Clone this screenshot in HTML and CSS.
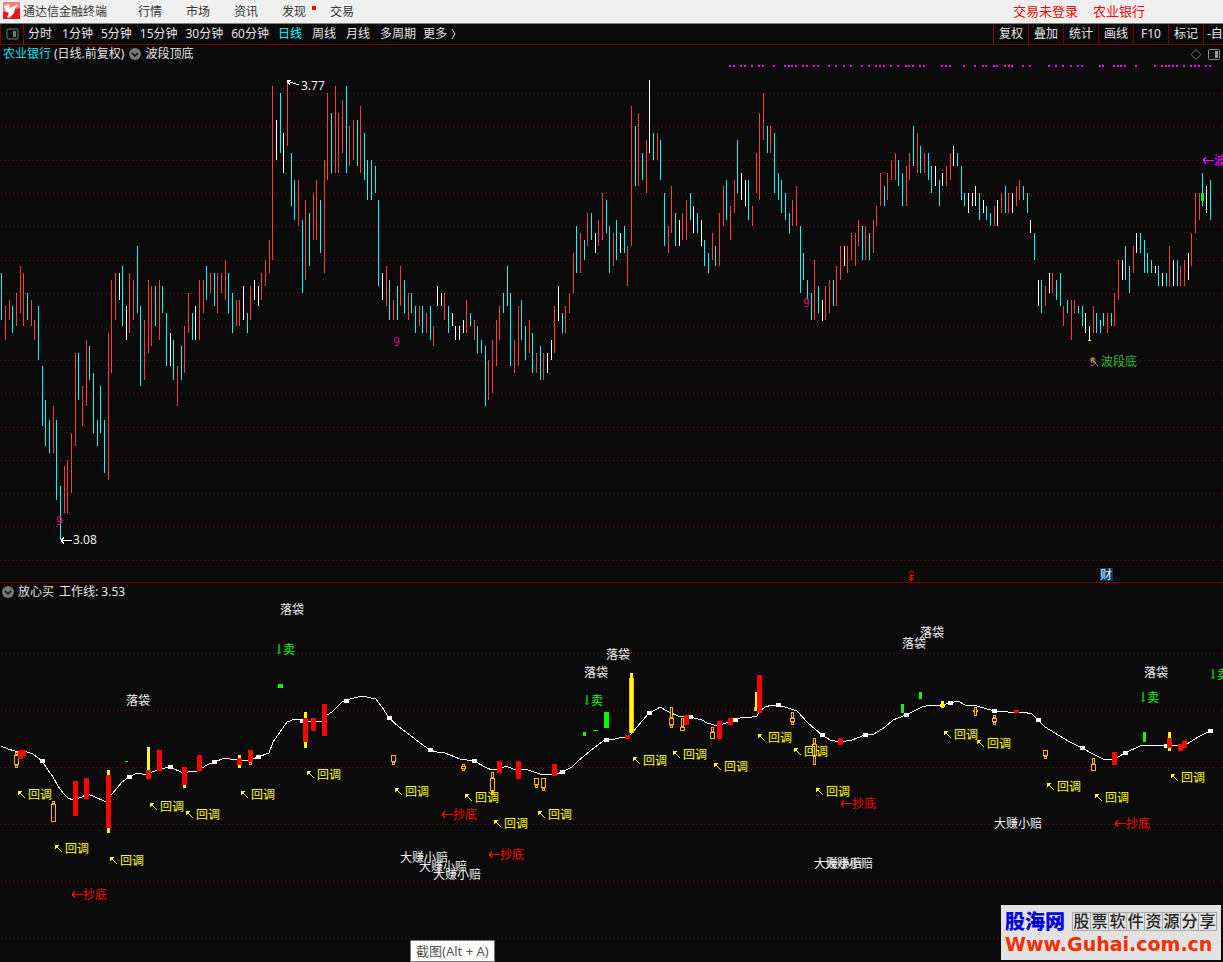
FILE: index.html
```html
<!DOCTYPE html>
<html lang="zh-CN">
<head>
<meta charset="utf-8">
<meta name="viewport" content="width=device-width, initial-scale=1">
<title>通达信金融终端</title>
<link rel="stylesheet" href="styles.css">
</head>
<body>
<header class="menubar">
  <svg class="logo" viewBox="0 0 17 17" aria-hidden="true">
    <rect width="17" height="17" fill="#e01b1b"/>
    <path d="M0 0h17v6L0 10z" fill="#f4827e"/>
    <path d="M1 4l5-2 1 4 9-4-4 4-1 5-5 5-2-1 2-4-3-1-1-3z" fill="#fff"/>
  </svg>
  <span class="brand">通达信金融终端</span>
  <nav class="menu">
    <button>行情</button>
    <button>市场</button>
    <button>资讯</button>
    <button class="has-news">发现</button>
    <button>交易</button>
  </nav>
  <div class="account"><button>交易未登录</button><button>农业银行</button></div>
</header>

<div class="toolbar">
  <button class="pane-toggle" aria-label="侧栏">
    <svg width="13" height="12" viewBox="0 0 13 12"><rect x="1" y="1" width="11" height="10" rx="1" fill="none" stroke="#777"/><rect x="7" y="3" width="3" height="6" fill="#777"/></svg>
  </button>
  <div class="periods">
    <button class="first">分时</button>
    <button>1分钟</button>
    <button>5分钟</button>
    <button>15分钟</button>
    <button>30分钟</button>
    <button>60分钟</button>
  </div>
  <div class="periods long">
    <button class="line active">日线</button>
    <button class="line">周线</button>
    <button class="line">月线</button>
    <button>多周期</button>
    <button class="more">更多<svg width="5" height="12" viewBox="0 0 5 12" aria-hidden="true"><path d="M1 1l3 5-3 5" fill="none" stroke="#ddd"/></svg></button>
  </div>
  <div class="tools">
    <button>复权</button>
    <button>叠加</button>
    <button>统计</button>
    <button>画线</button>
    <button>F10</button>
    <button>标记</button>
    <button class="cut">-自</button>
  </div>
</div>

<main>
  <section class="panel">
    <div class="panel-title">
      <span class="stock">农业银行</span>
      <span class="mode">(日线.前复权)</span>
      <svg class="fold" width="12" height="12" viewBox="0 0 12 12" aria-hidden="true"><circle cx="6" cy="6" r="6" fill="#777"/><path d="M3 5l3 3 3-3" fill="none" stroke="#0a0a0a" stroke-width="1.5"/></svg>
      <span>波段顶底</span>
      <svg class="corner" width="30" height="13" viewBox="0 0 30 13" aria-hidden="true"><path d="M6 1.500l5 5-5 5-5-5z" fill="none" stroke="#777"/><rect x="18.500" y="1.500" width="11" height="10" rx="1" fill="none" stroke="#888"/><rect x="25" y="3" width="3" height="7" fill="#999"/></svg>
    </div>
    <svg class="chart" id="price" viewBox="0 63 1223 519" role="img" aria-label="K线">
      <g class="grid"></g>
      <g class="bars"></g>
      <g class="dots"></g>
      <rect x="1201" y="193" width="3" height="8" fill="#0f0"/>
      <rect x="1088" y="340" width="3" height="1" fill="#ff0"/>
      <g class="arrow white">
        <path d="M61 540.500H72M61 540.500l3-3M61 540.500l3 3"/>
        <path d="M287 81l12 4M287 81l4-1M287 81l3 4"/>
      </g>
      <text class="white" x="73" y="544">3.08</text>
      <text class="white" x="301" y="90">3.77</text>
      <g class="nine">
        <text x="56" y="525">9</text>
        <text x="393" y="346">9</text>
        <text x="803" y="307">9</text>
        <text x="1089" y="366">9</text>
      </g>
      <path class="arrow head lime" d="M1091 358h4l-4 4zM1091 358l7 8"/>
      <text class="bottom" x="1101" y="366">波段底</text>
      <path class="arrow magenta" d="M1203 160.500h11M1203 160.500l3-3M1203 160.500l3 3"/>
      <text class="magenta" x="1214" y="165">波段顶</text>
      <path class="arrow red smooth" d="M909 573l2.500-2 2.500 2M914 575.500h-3.500q-1 0-1 1t1 1h2q1 0 1 1t-1 1H909M911.500 574v7"/>
      <rect x="1100" y="568" width="13" height="13" fill="#003a70"/>
      <text class="white" x="1100" y="579">财</text>
    </svg>
  </section>

  <section class="panel lower">
    <div class="panel-title">
      <svg class="fold" width="12" height="12" viewBox="0 0 12 12" aria-hidden="true"><circle cx="6" cy="6" r="6" fill="#777"/><path d="M3 5l3 3 3-3" fill="none" stroke="#0a0a0a" stroke-width="1.500"/></svg>
      <span>放心买</span>
      <span class="value">工作线: 3.53</span>
    </div>
    <svg class="chart" id="signal" viewBox="0 601 1223 361" role="img" aria-label="放心买">
      <g class="grid"></g>
      <polyline class="workline"/>
      <g class="nodes"></g>
      <g class="blocks"></g>
      <g class="notes"></g>
    </svg>
  </section>
</main>

<div class="tip" role="tooltip">截图(Alt + A)</div>
<aside class="watermark">
  <div class="row"><b>股海网</b><span class="cells"><span>股</span><span>票</span><span>软</span><span>件</span><span>资</span><span>源</span><span>分</span><span>享</span></span></div>
  <div class="site">Www.Guhai.com.cn</div>
</aside>
<script src="app.js"></script>
</body>
</html>
```
FILE: styles.css
```css
* { box-sizing: border-box; }
body {
  margin: 0;
  position: relative;
  background: #0a0a0a;
  color: #e6e6e6;
  font: 12px/18px "Noto Sans", "Noto Sans CJK SC", sans-serif;
  overflow-x: hidden;
}
button {
  margin: 0;
  padding: 0;
  border: 0;
  background: none;
  color: inherit;
  font: inherit;
  white-space: nowrap;
}
.menubar {
  display: flex;
  align-items: center;
  height: 24px;
  padding: 0 78px 0 3px;
  background: #f0f0f0;
  border-bottom: 1px solid #808080;
  color: #333;
}
.logo { width: 17px; height: 17px; margin: 0 3px 2px 0; }
.brand { margin-right: 31px; }
.menu { display: flex; gap: 24px; }
.has-news { position: relative; }
.has-news::after {
  content: "";
  position: absolute;
  left: 30px;
  top: 3px;
  width: 4px;
  height: 4px;
  background: #f00;
}
.account { display: flex; gap: 15px; margin: 0 0 1px auto; color: #f00; font-size: 13px; }

.toolbar {
  display: flex;
  height: 21px;
  border-bottom: 1px solid #800000;
}
.pane-toggle {
  display: grid;
  place-items: center;
  width: 24px;
  border: solid #800000;
  border-width: 0 1px;
}
.periods { display: flex; align-items: center; gap: 8px; padding-left: 4px; }
.periods .first { margin-right: 2px; }
.long { gap: 7px; padding-left: 9px; }
.line { margin-right: 3px; }
.active { color: #00ffff; }
.more { display: flex; align-items: center; gap: 4px; }
.tools { display: flex; margin-left: auto; overflow: hidden; }
.tools button { width: 35px; border-left: 1px solid #800000; }
.tools .cut { width: 20px; text-align: left; padding-left: 3px; overflow: hidden; }

.panel-title {
  display: flex;
  align-items: center;
  height: 18px;
  padding: 0 3px;
}
.stock { color: #00e5ee; margin-right: 3px; }
.fold { margin: 0 4px 0 5px; }
.corner { margin-left: auto; }
.lower { border-top: 1px solid #800000; }
.lower .panel-title { padding-left: 2px; }
.lower .fold { margin-left: 0; }
.value { margin-left: 5px; }
.chart { display: block; width: 100%; height: auto; shape-rendering: crispEdges; }
.chart text { font: 12px "Noto Sans", "Noto Sans CJK SC", sans-serif; }
.grid path { stroke: #780808; stroke-dasharray: 1 3; }
.bars .R { stroke: #ff3c3c; }
.bars .C { stroke: #00ffff; }
.bars .W { stroke: #ffffff; }
.dots { fill: #f0f; }
.white { color: #fff; fill: #f0f0f0; }
.lime { color: #3fbf3f; }
.red { color: #f00; }
.magenta { color: #f0f; fill: #f0f; }
.nine { fill: #e6007e; }
.bottom { fill: #38b838; }
.workline { fill: none; stroke: #fff; }
.nodes { fill: #fff; }
.block-red { fill: #f00; }
.block-yellow { fill: #ff0; }
.block-green { fill: #0f0; }
.block-outline { fill: #0a0a0a; stroke: #ffb400; }
.dip { color: #ff0; fill: #ff0; }
.buy { color: #f00; fill: #f00; }
.sell { color: #00a000; fill: #0f0; }
.plain { fill: #f4f4f4; }
.arrow { fill: none; stroke: currentColor; }
.arrow.head { fill: currentColor; stroke-width: 1px; }
.smooth { shape-rendering: geometricPrecision; }

.tip {
  position: absolute;
  left: 410px;
  bottom: 0;
  padding: 1px 5px;
  border: 1px solid #777;
  background: #fff;
  color: #555;
  font-size: 13px;
}
.watermark {
  position: absolute;
  right: 2px;
  bottom: 2px;
  width: 220px;
  height: 55px;
  padding: 6px 4px 0 4px;
  background: #e2e2e2;
  white-space: nowrap;
}
.row { display: flex; justify-content: space-between; align-items: center; height: 21px; }
.row b { color: #0000e0; font-size: 20px; font-weight: 900; }
.cells { display: flex; border-right: 1px solid #aaa; }
.cells span {
  width: 18px;
  border: 1px solid #aaa;
  border-right: 0;
  color: #222;
  font-size: 16px;
  font-weight: 500;
  line-height: 17px;
  text-align: center;
}
.site { color: #f03000; font: bold 19px/24px "DejaVu Sans", sans-serif; }
```
FILE: app.js
```js
const add = (parent, name, attrs, text) => {
  const el = document.createElementNS('http://www.w3.org/2000/svg', name);
  for (const key in attrs) el.setAttribute(key, attrs[key]);
  if (text) el.textContent = text;
  parent.appendChild(el);
  return el;
};
const part = (selector) => document.querySelector(selector);
const rows = (text) => text.trim().split(/\s+/).map((r) => r.split(',').map(Number));

// Horizontal guide lines
[93, 126, 160, 193, 226, 260, 293, 326, 360, 393, 427, 460, 493, 526, 560]
  .forEach((y) => add(part('#price .grid'), 'path', { d: `M1 ${y + 0.5}H1223` }));
[653, 710, 767, 824, 881, 938]
  .forEach((y) => add(part('#signal .grid'), 'path', { d: `M1 ${y + 0.5}H1223` }));

// Daily high-low bars: x, colour, top, bottom
const bars = `
1C273-320 5R306-340 9R300-320 12C306-333 16R293-326 20R266-313 23R273-326 27C293-320 31R300-326 34R320-340
38C306-360 42C366-426 45C400-446 49C420-453 53R406-453 56C420-500 60C486-540 64R466-513 67R460-513 71R433-493
75R353-446 78C353-400 82R386-426 86R340-406 89C346-380 93C373-433 97C420-446 100C386-433 104C420-473 108R333-480
111R280-373 115R273-320 119W273-300 122C266-326 126W306-340 129R273-333 133R280-320 137C246-313 140C306-386
144R320-380 148R280-353 151R286-346 155C286-326 159R280-340 162C286-313 166C313-366 170W333-366 173C340-380
177R366-406 181C346-380 184R326-373 188R293-333 192C313-340 195W306-340 199R280-340 203R280-313 206C266-300
210R273-293 214C273-306 217R273-313 221R273-293 225R260-300 228C273-313 232C293-333 236R300-326 239R300-326
243W286-320 247C313-333 250R286-320 254W280-300 258W286-306 261R273-300 265R260-286 269R240-273 272R86-260
276W120-160 280C93-153 283W133-173 287R80-146 291C153-206 294C180-220 298R180-226 302C220-293 305R200-280
309C213-266 313R193-240 316R180-240 320C200-253 324R160-273 327R93-180 331C113-173 335R86-173 338R113-173
342R100-153 346C86-173 349R126-166 353R120-160 357C120-166 360R106-173 364C133-180 367C160-200 371C160-200
375C166-193 378C200-286 382W273-300 386R266-306 389C280-320 393R300-320 397C286-320 400R266-306 404C280-313
408R293-320 411C293-313 415C306-333 419R306-326 422C306-333 426R313-333 430C306-340 433R326-346 437W286-306
441W293-306 444R293-320 448C306-333 452W313-326 455W326-340 459W326-340 463W320-333 466R300-333 470C313-326
474R320-340 477C326-353 481C340-353 485C346-406 488R360-400 492R340-393 496R320-366 499R306-340 503C293-313
507C266-306 510C293-366 514R340-373 518R306-366 521C300-340 525C326-360 529R320-353 532C333-373 536R353-373
540C346-380 543R353-380 547W353-373 551W340-360 554R306-353 558W286-321 562C313-333 565R306-333 569R293-313
573R253-293 576C226-273 580R233-273 584C240-260 587R213-246 591C213-240 595W233-253 598R220-246 602R193-240
606C200-233 609C226-273 613R233-266 616C220-260 620W233-253 624C226-253 627R246-286 631R106-246 635C126-186
638R113-186 642C153-180 646R140-193 649W80-153 653C133-160 657R133-160 660C140-180 664C193-246 668R226-253
671R186-233 675C213-246 679W220-246 682R213-240 686R200-240 690C193-220 693W206-233 697C213-233 701W220-246
704C240-266 708C253-273 712R233-260 715C246-266 719R213-266 723R186-226 726C180-220 730R206-240 734R180-213
737C140-193 741W173-200 745W180-206 748C180-220 752R206-226 756R153-193 759R113-200 763R93-140 767C126-153
770R126-153 774C133-193 778C173-200 781C180-213 785C193-220 789C213-233 792R200-226 796R186-226 800C226-293
803C253-280 807C280-300 811C293-320 814R260-320 818C286-313 822W300-321 825R286-320 829R280-313 833C280-306
836R266-306 840R246-280 844W246-266 847R246-273 851R233-260 855R233-266 858R220-246 862C226-260 865R226-260
869C233-260 873R220-253 876R206-226 880R173-206 884C186-206 887R173-200 891R160-180 895R153-180 898C160-186
902C173-206 906R166-206 909R153-180 913C126-166 917R133-173 920C146-173 924R153-173 928C153-180 931C166-193
935W166-186 939C180-206 942W173-186 946R166-186 950R153-180 953W146-166 957C153-166 961C166-200 964C193-206
968W193-213 972W193-206 975W186-206 979C193-220 983W200-213 986C206-220 990C213-226 994R206-226 997W200-226
1001R193-213 1005C186-213 1008R193-213 1012W193-213 1016R186-206 1019R180-200 1023C186-200 1027C193-213
1030W220-233 1034C233-260 1038W280-306 1041C280-313 1045R286-306 1049W273-293 1052R273-293 1056C280-300
1060C273-306 1063R306-326 1067C300-313 1071R300-340 1074R300-313 1078C306-313 1082C306-326 1085W313-333
1089W326-340 1093R306-333 1096C313-333 1100C320-333 1103C313-326 1107R313-333 1111C313-326 1114R293-326
1118R260-300 1122W260-280 1125C246-280 1129C266-293 1133R246-273 1136W233-253 1140C233-253 1144C240-273
1147C253-273 1151C260-273 1155W266-273 1158C266-286 1162W273-286 1166C273-286 1169R246-286 1173W260-286
1177C260-286 1180R266-286 1184R260-286 1188W253-280 1191R233-266 1195R193-233 1199R193-220 1202C173-206
1206W186-213 1210C180-220`;
for (const [, x, color, top, bottom] of bars.matchAll(/(\d+)([RCW])(\d+)-(\d+)/g)) {
  add(part('#price .bars'), 'path', { class: color, d: `M${+x + 0.5} ${top}V${bottom}` });
}

// Band-top dots
[729, 733, 740, 744, 751, 758, 762, 773, 784, 788, 791, 795, 802, 806, 813, 817, 828, 835, 843, 850, 861, 868,
  875, 879, 883, 890, 897, 905, 908, 912, 919, 923, 941, 945, 949, 963, 974, 982, 985, 993, 996, 1004, 1008,
  1011, 1022, 1029, 1048, 1055, 1062, 1070, 1077, 1081, 1099, 1102, 1113, 1117, 1120, 1124, 1135, 1154, 1161,
  1165, 1168, 1172, 1176, 1183, 1190, 1194, 1198, 1205, 1209]
  .forEach((x) => add(part('#price .dots'), 'rect', { x, y: 65, width: 2, height: 2 }));

// Work line
part('.workline').setAttribute('points', `
1,746 8,749 15,751 27,752 33,754 42,761 48,770 53,777 58,786 63,793 68,798 73,800 82,797 87,794 93,796 106,802
112,794 122,782 129,777 137,773 142,774 147,774 160,769 170,767 183,773 188,772 197,771 207,765 214,762 225,758
230,759 248,761 258,757 269,753 273,742 280,732 287,722 295,719 302,720 310,722 322,721 327,715 332,712 342,702
350,699 362,696 376,699 382,707 389,718 399,727 410,735 420,743 430,750 437,752 445,753 460,759 474,761 487,768
492,770 499,769 506,766 513,769 528,770 540,774 548,775 557,774 562,772 572,767 578,761 590,751 603,741 615,739
623,737 628,737 632,733 637,727 649,713 657,709 660,707 667,711 678,716 690,717 702,720 707,723 718,726 723,724
735,720 743,717 752,717 757,716 760,711 765,707 772,705 778,705 788,708 797,711 808,723 822,735 830,740 840,742
852,740 865,735 874,734 885,727 893,720 906,715 922,707 930,705 942,705 950,703 958,701 965,705 977,706 994,711
1008,712 1023,712 1032,714 1038,720 1045,727 1055,733 1068,741 1082,748 1093,754 1103,759 1113,760 1125,753
1140,746 1167,745 1178,745 1187,744 1198,737 1210,731`);
rows(`42,761 129,777 170,767 214,762 258,757 302,721 346,701 389,718 430,750 474,761 562,772 606,740 649,713
690,717 735,720 778,705 822,735 865,735 906,715 950,703 994,711 1038,720 1082,748 1125,753 1166,746 1210,731`)
  .forEach(([x, y]) => add(part('.nodes'), 'rect', { x: x - 2, y: y - 2, width: 5, height: 4 }));

// Signal blocks: x, y, width, height
const blocks = {
  outline: `14,755,5,10 15,752,3,3 15,765,3,3 51,804,5,18 52,801,3,3 249,762,3,3 391,755,5,7 392,762,3,3
    462,764,3,7 461,766,5,3 491,772,3,6 490,778,5,13 491,791,3,4 534,778,5,7 535,785,3,3 541,778,5,10 542,788,3,3
    629,678,5,55 670,707,3,11 669,718,5,7 670,725,3,3 681,718,3,9 680,727,5,4 711,727,3,5 710,732,5,7 754,707,3,4
    791,712,3,6 790,718,5,4 791,722,3,3 813,738,3,6 812,744,5,12 813,756,3,9 973,710,5,2 974,707,3,9
    992,718,5,4 993,715,3,3 993,722,3,3 1043,750,5,6 1044,756,3,3 1092,758,3,6 1091,764,5,7`,
  yellow: `107,770,3,5 107,828,3,5 147,747,3,23 183,785,3,3 238,755,3,3 238,765,3,3 304,712,3,6 304,742,3,6
    630,673,3,60 755,692,2,19 941,701,3,7 940,704,5,3 1168,732,3,6 1168,748,3,3`,
  red: `18,750,8,6 18,756,5,3 73,781,5,35 84,778,5,21 106,775,5,53 146,770,5,9 157,750,5,21 182,767,5,18
    197,755,5,16 237,758,5,7 248,750,5,12 303,718,5,24 311,718,5,13 322,704,5,32 497,761,5,12 516,761,5,18
    552,764,5,12 625,735,5,4 684,715,5,10 717,721,5,18 728,718,5,7 757,675,5,38 838,738,5,7 1014,710,5,3
    1112,752,5,13 1167,738,5,10 1178,744,5,7 1182,741,5,7`,
  green: `278,684,5,4 125,761,3,1 583,732,3,4 593,730,5,1 604,712,5,16 901,704,3,9 919,692,3,7 1143,732,3,10`,
};
for (const kind in blocks) {
  const line = kind === 'outline' ? 1 : 0;
  rows(blocks[kind]).forEach(([x, y, w, h]) => add(part('.blocks'), 'rect', {
    class: `block-${kind}`, x: x + line / 2, y: y + line / 2, width: w - line, height: h - line,
  }));
}

// Labels: left edge and vertical centre
const notes = [
  { cls: 'dip', text: '回调', shift: 10, arrow: 'M.5 -2.5h3l-3 3zM.5 -2.500l7 7', head: true,
    at: `18,794 55,848 110,860 150,806 186,814 241,794 307,774 395,791 465,797 494,823 538,814 633,760 673,754
      714,766 758,737 794,751 816,791 944,734 977,743 1047,786 1095,797 1171,777` },
  { cls: 'buy', text: '抄底', shift: 11, arrow: 'M0 .5h11M0 .5l3-3M0 .5l3 3',
    at: '72,894 442,814 489,854 841,803 1115,823' },
  { cls: 'sell', text: '卖', shift: 6, arrow: 'M2 -5v10M1 -5v10M0 3.500h4',
    at: '277,649 585,700 1141,697 1211,674' },
  { cls: 'plain', text: '落袋', shift: 0, at: '280,609 126,700 606,654 584,672 920,632 902,643 1144,672' },
  { cls: 'plain', text: '大赚小赔', shift: 0, at: '400,857 419,866 433,874 814,863 825,863 994,823' },
];
for (const { cls, text, shift, arrow, head, at } of notes) {
  rows(at).forEach(([x, y]) => {
    const g = add(part('.notes'), 'g', { class: cls, transform: `translate(${x} ${y})` });
    if (arrow) add(g, 'path', { class: head ? 'arrow head' : 'arrow', d: arrow });
    add(g, 'text', { x: shift, y: 5 }, text);
  });
}
```
